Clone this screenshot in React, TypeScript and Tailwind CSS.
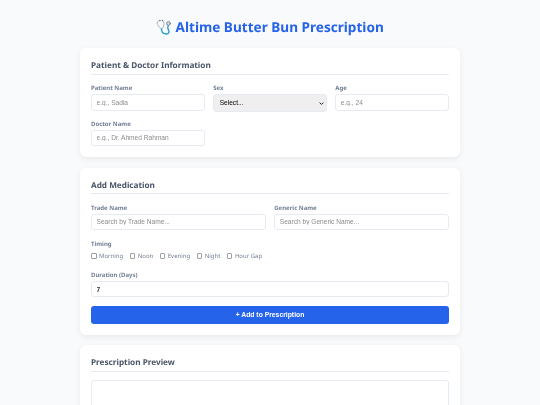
const inputClass =
  'block h-[16.5px] w-full rounded-[3px] border border-[#e6ebf1] bg-white px-[4.5px] font-["Liberation_Sans",sans-serif] text-[6.6px] text-[#333333] placeholder:text-[#8c8c8c] outline-none';

function Label({ children }: { children: string }) {
  return <label className="mb-[2px] block h-[9px] text-[6px] leading-[10px] font-bold text-[#718096]">{children}</label>;
}

function Field({ label, placeholder }: { label: string; placeholder: string }) {
  return (
    <div>
      <Label>{label}</Label>
      <input className={inputClass} placeholder={placeholder} readOnly />
    </div>
  );
}

function Card({ title, children }: { title: string; children: React.ReactNode }) {
  return (
    <section className="mb-[10.5px] rounded-[6px] bg-white px-[11px] pt-[10px] pb-[11px] shadow-[0_2px_6px_rgba(0,0,0,0.07)]">
      <h2 className="mb-[8.5px] h-[16.5px] border-b border-[#e6ebf1] text-[8.2px] leading-[15px] font-bold text-[#4a5568]">{title}</h2>
      {children}
    </section>
  );
}

function Stethoscope() {
  return (
    <svg viewBox="0 0 16 16" className="mr-[3.3px] h-[16px] w-[16px]" fill="none" strokeLinecap="round">
      <path d="M4 1.5 C1.5 1.5 0.5 3.5 1.5 5.5 C2.5 7.5 4.5 9.5 5.5 10 C7 9.5 8 7 8 4.5 C8 3 7.5 2 6.5 1.5" stroke="#a9b4bb" strokeWidth="1" />
      <path d="M5.5 10 C5.5 13 7.5 15 10.5 15 C13 15 13.5 12.5 12.5 11 C11.5 9.5 11.5 8 12.3 6.5" stroke="#2a9fd6" strokeWidth="1.4" />
      <circle cx="12.5" cy="4.5" r="1.9" fill="#d5dde1" stroke="#5f7480" strokeWidth="0.8" />
      <circle cx="4" cy="1.5" r="0.7" fill="#5f7480" />
      <circle cx="6.5" cy="1.5" r="0.7" fill="#5f7480" />
    </svg>
  );
}

export default function App() {
  return (
    <div className='h-[405px] overflow-hidden bg-[#f8fafc] font-["Noto_Sans",sans-serif] [text-rendering:geometricPrecision] [will-change:transform]'>
      <div className="mx-auto w-[380px] pt-[17px]">
        <h1 className="mb-[11px] flex h-[20px] items-center justify-center text-[13.6px] leading-[20px] font-bold text-[#2563eb]">
          <Stethoscope />
          Altime Butter Bun Prescription
        </h1>

        <Card title="Patient & Doctor Information">
          <div className="grid grid-cols-3 gap-x-[8.5px] gap-y-[7px]">
            <Field label="Patient Name" placeholder="e.g., Sadia" />
            <div>
              <Label>Sex</Label>
              <div className="relative">
                <select className='block h-[17.5px] w-full appearance-none rounded-[3px] border border-[#e6ebf1] bg-[#efefef] px-[5.5px] font-["Liberation_Sans",sans-serif] text-[6.6px] text-black'>
                  <option>Select...</option>
                </select>
                <svg viewBox="0 0 8 8" className="pointer-events-none absolute top-[6.5px] right-[2.5px] h-[5px] w-[5px]" fill="none">
                  <path d="M1 2.5 L4 5.5 L7 2.5" stroke="#222" strokeWidth="1.6" />
                </svg>
              </div>
            </div>
            <Field label="Age" placeholder="e.g., 24" />
            <Field label="Doctor Name" placeholder="e.g., Dr. Ahmed Rahman" />
          </div>
        </Card>

        <Card title="Add Medication">
          <div className="mb-[8.5px] grid grid-cols-2 gap-x-[8.5px]">
            <Field label="Trade Name" placeholder="Search by Trade Name..." />
            <Field label="Generic Name" placeholder="Search by Generic Name..." />
          </div>
          <Label>Timing</Label>
          <div className="mt-[3px] mb-[8.3px] flex h-[11px] items-center gap-[6.5px] text-[6px] text-[#718096]">
            {['Morning', 'Noon', 'Evening', 'Night', 'Hour Gap'].map((t) => (
              <span key={t} className="flex items-center gap-[2.5px]">
                <input type="checkbox" readOnly className="m-0 h-[5.5px] w-[5.5px] appearance-none rounded-[1px] border-[0.5px] border-[#a0a0a0] bg-white" />
                {t}
              </span>
            ))}
          </div>
          <Label>Duration (Days)</Label>
          <input className={`${inputClass} mb-[9px] font-bold`} value="7" readOnly />
          <button className='block h-[17.5px] w-full rounded-[3px] bg-[#2563eb] font-["Liberation_Sans",sans-serif] text-[6.8px] font-bold text-white'>
            + Add to Prescription
          </button>
        </Card>

        <Card title="Prescription Preview">
          <div className="h-[200px] rounded-[3px] border border-[#e6ebf1]" />
        </Card>
      </div>
    </div>
  );
}
